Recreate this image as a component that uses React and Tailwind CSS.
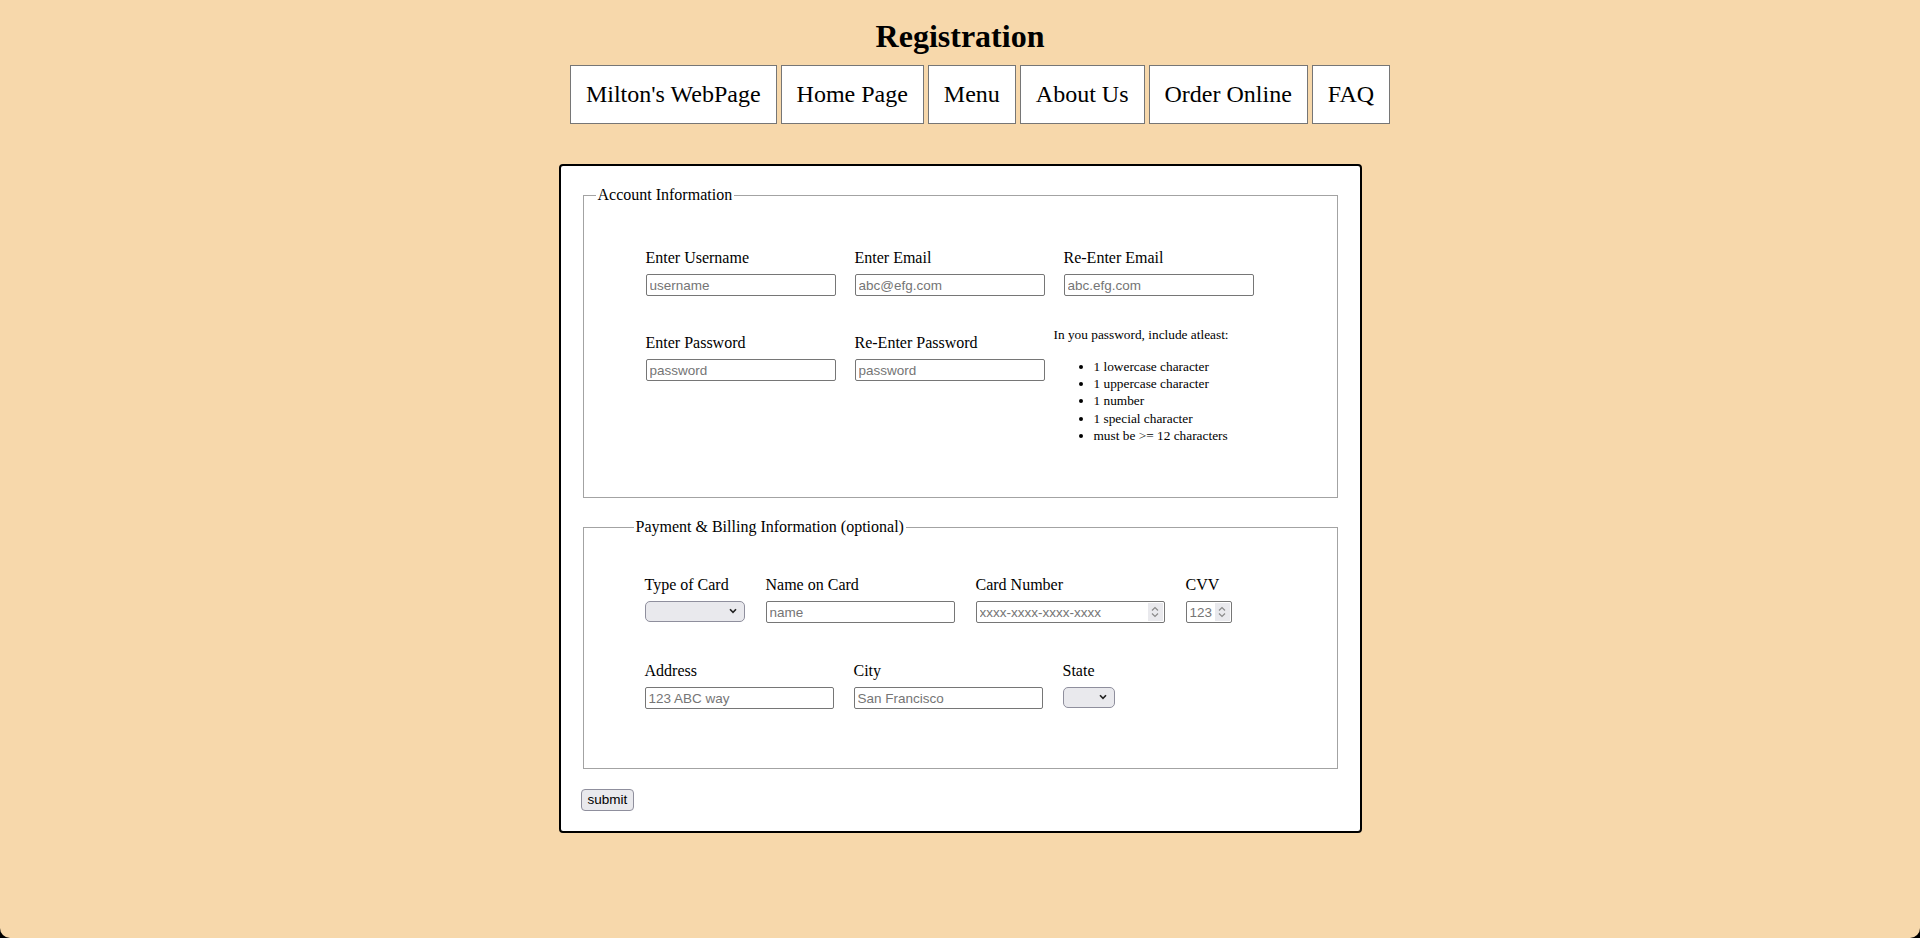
import { useState } from "react";

const navLinks = ["Milton's WebPage", "Home Page", "Menu", "About Us", "Order Online", "FAQ"];

const inputCls =
  "block h-[22px] rounded-[2px] border border-[#767676] bg-white px-[3px] font-['Liberation_Sans',Arial,sans-serif] text-[13.5px] text-black placeholder:text-[#757575] outline-none";

function Field({ label, className = "", children }) {
  return (
    <div className={className}>
      <label className="block leading-[18px]">{label}</label>
      <div className="mt-[7px]">{children}</div>
    </div>
  );
}

function Spinner() {
  // fake number-input stepper (chrome shows it on hover only)
  return (
    <span className="absolute right-[2px] top-[2px] bottom-[2px] flex w-[15px] items-center justify-center bg-[#e9e9ed]">
      <svg width="8" height="12" viewBox="0 0 8 12" fill="none" stroke="#8a8a8a" strokeWidth="1.2">
        <path d="M1 4.5 4 1.5 7 4.5" />
        <path d="M1 7.5 4 10.5 7 7.5" />
      </svg>
    </span>
  );
}

function NumberInput({ width, placeholder }) {
  return (
    <div className={"relative " + width}>
      <input type="text" placeholder={placeholder} className={inputCls + " w-full"} />
      <Spinner />
    </div>
  );
}

function Select({ width }) {
  return (
    <div className={"relative " + width}>
      <select className="block h-[21px] w-full appearance-none rounded-[5px] border border-[#8f8f9d] bg-[#e9e9ed] outline-none">
        <option value=""></option>
      </select>
      <svg
        className="pointer-events-none absolute right-[8px] top-[7px]"
        width="8"
        height="6"
        viewBox="0 0 8 6"
        fill="none"
        stroke="#222"
        strokeWidth="1.6"
      >
        <path d="M1 1.2 4 4.4 7 1.2" />
      </svg>
    </div>
  );
}

export default function App() {
  const [sent, setSent] = useState(false);

  return (
    <div className="bg-black">
      <div className="min-h-[938px] rounded-b-[10px] bg-[#f7d8ab] pb-[20px] font-['Liberation_Serif','Times_New_Roman',serif] text-[16px] text-black">
        <h1 className="pt-[18px] text-center text-[32px] font-bold leading-[37px]">Registration</h1>

        {/* nav */}
        <ul className="mt-[10px] flex justify-center gap-[4px] pl-[40px]">
          {navLinks.map((l) => (
            <li key={l}>
              <a href="#" className="block border border-[#767676] bg-white px-[15px] py-[15px] text-[24px] leading-[27px]">
                {l}
              </a>
            </li>
          ))}
        </ul>

        <form
          onSubmit={(e) => {
            e.preventDefault();
            setSent(true);
          }}
          className="mx-auto mt-[40px] w-[803px] rounded-[4px] border-2 border-black bg-white p-[20px]"
        >
          <fieldset className="mx-[2px] border border-[#a3a3a3] pb-[53px] pl-[62px] pt-[45px]">
            <legend className="-ml-[50px] px-[2px] leading-[18px]">Account Information</legend>

            <div className="flex gap-x-[19px]">
              <Field label="Enter Username">
                <input type="text" placeholder="username" className={inputCls + " w-[190px]"} />
              </Field>
              <Field label="Enter Email">
                <input type="text" placeholder="abc@efg.com" className={inputCls + " w-[190px]"} />
              </Field>
              <Field label="Re-Enter Email">
                <input type="text" placeholder="abc.efg.com" className={inputCls + " w-[190px]"} />
              </Field>
            </div>

            <div className="mt-[38px] flex items-start gap-x-[19px]">
              <Field label="Enter Password">
                <input type="password" placeholder="password" className={inputCls + " w-[190px]"} />
              </Field>
              <Field label="Re-Enter Password">
                <input type="password" placeholder="password" className={inputCls + " w-[190px]"} />
              </Field>
              <div className="-ml-[10px] -mt-[8px] text-[13.33px] leading-[17px]">
                <p>In you password, include atleast:</p>
                <ul className="mt-[15px] list-disc pl-[40px] leading-[17.2px]">
                  <li>1 lowercase character</li>
                  <li>1 uppercase character</li>
                  <li>1 number</li>
                  <li>1 special character</li>
                  <li>must be &gt;= 12 characters</li>
                </ul>
              </div>
            </div>
          </fieldset>

          <fieldset className="mx-[2px] mt-[20px] border border-[#a3a3a3] pb-[59px] pl-[61px] pt-[40px]">
            <legend className="-ml-[11px] px-[2px] leading-[18px]">Payment &amp; Billing Information (optional)</legend>

            <div className="flex gap-x-[21px]">
              <Field label="Type of Card">
                <Select width="w-[100px]" />
              </Field>
              <Field label="Name on Card">
                <input type="text" placeholder="name" className={inputCls + " w-[189px]"} />
              </Field>
              <Field label="Card Number">
                <NumberInput width="w-[189px]" placeholder="xxxx-xxxx-xxxx-xxxx" />
              </Field>
              <Field label="CVV">
                <NumberInput width="w-[46px]" placeholder="123" />
              </Field>
            </div>

            <div className="mt-[39px] flex gap-x-[20px]">
              <Field label="Address">
                <input type="text" placeholder="123 ABC way" className={inputCls + " w-[189px]"} />
              </Field>
              <Field label="City">
                <input type="text" placeholder="San Francisco" className={inputCls + " w-[189px]"} />
              </Field>
              <Field label="State">
                <Select width="w-[52px]" />
              </Field>
            </div>
          </fieldset>

          <button
            type="submit"
            className="mt-[20px] block h-[22px] rounded-[4px] border border-[#8f8f9d] bg-[#e9e9ed] px-[6px] font-['Liberation_Sans',Arial,sans-serif] text-[13.5px] leading-[18px]"
          >
            {sent ? "submit" : "submit"}
          </button>
        </form>
      </div>
    </div>
  );
}
